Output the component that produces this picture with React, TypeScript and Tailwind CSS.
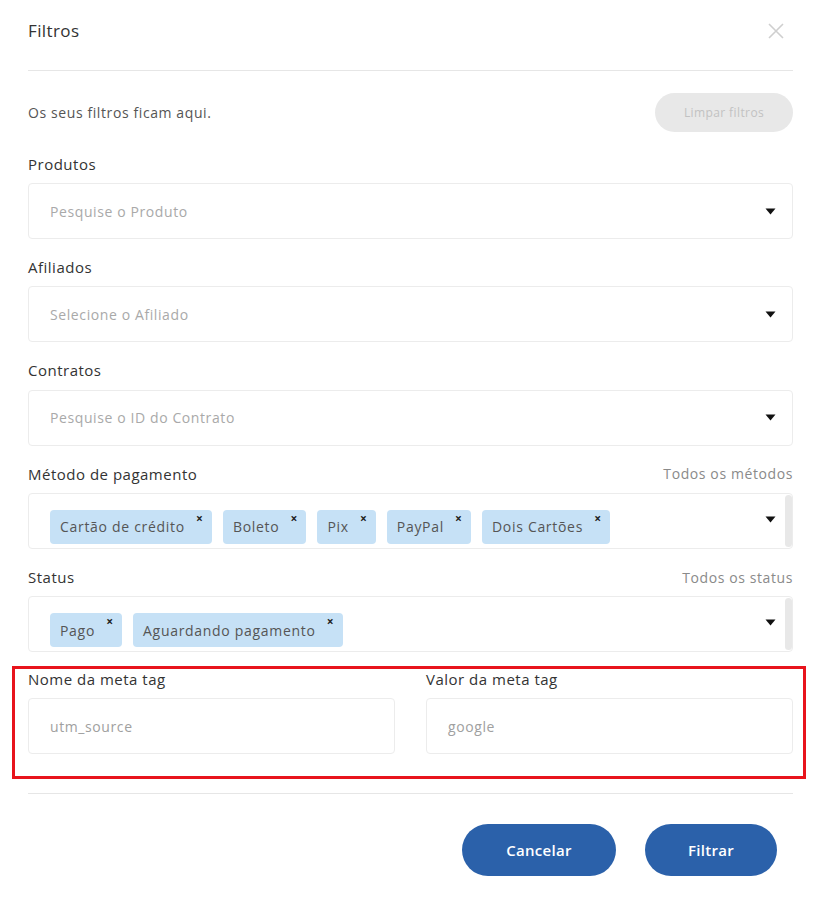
import React from 'react';

const FONT = "font-['Open_Sans',sans-serif]";

const PAYMENT_METHODS = ['Cartão de crédito', 'Boleto', 'Pix', 'PayPal', 'Dois Cartões'];
const STATUSES = ['Pago', 'Aguardando pagamento'];

function Caret() {
  return (
    <svg width="11" height="7" viewBox="0 0 11 7" className="shrink-0">
      <path d="M0.5 0.5 L10.5 0.5 L5.5 6.5 Z" fill="#111" />
    </svg>
  );
}

function Label({ text, hint }: { text: string; hint?: string }) {
  return (
    <div className="mb-[9px] flex h-5 items-center justify-between">
      <span className="text-[15px] font-medium tracking-[0.5px] text-[#333]">{text}</span>
      {hint && <span className="text-[14px] tracking-[0.6px] text-[#8a8a8a]">{hint}</span>}
    </div>
  );
}

function SelectBox({ placeholder }: { placeholder: string }) {
  return (
    <div className="flex h-[56px] items-center justify-between rounded border border-[#ececec] bg-white pl-[21px] pr-[16px]">
      <span className="text-[14px] tracking-[0.6px] text-[#a9a9a9]">{placeholder}</span>
      <Caret />
    </div>
  );
}

function Chip({ text }: { text: string }) {
  return (
    <div className="relative flex h-[34px] items-center rounded bg-[#c6e1f6] pl-[10px] pr-[27px]">
      <span className="text-[14px] tracking-[0.7px] text-[#555]">{text}</span>
      <span className="absolute right-[9px] top-[2px] text-[12px] font-bold leading-[14px] text-[#222]">×</span>
    </div>
  );
}

function ChipBox({ items }: { items: string[] }) {
  return (
    <div className="flex h-[56px] items-stretch rounded border border-[#ececec] bg-white">
      <div className="flex flex-1 items-end gap-[11px] pb-[4px] pl-[21px]">
        {items.map((t) => (
          <Chip key={t} text={t} />
        ))}
      </div>
      <div className="flex items-center pb-[3px] pr-[9px]">
        <Caret />
      </div>
      <div className="my-[1px] w-[7px] rounded bg-[#e8e8e8]" />
    </div>
  );
}

function TextInput({ value }: { value: string }) {
  return (
    <div className="flex h-[56px] items-center rounded border border-[#ececec] bg-white pl-[21px]">
      <span className="text-[14px] tracking-[0.6px] text-[#a0a0a0]">{value}</span>
    </div>
  );
}

export default function App() {
  return (
    <div className={`${FONT} min-h-[901px] w-[825px] bg-white`}>
      <div className="pl-[28px] pr-[32px]">
        {/* Header */}
        <div className="flex items-center justify-between border-b border-[#e6e6e6] pb-[28px] pt-[20px]">
          <h2 className="text-[17px] font-medium leading-[22px] tracking-[0.4px] text-[#333]">Filtros</h2>
          <svg width="18" height="18" viewBox="0 0 18 18" className="mr-[8px]">
            <path d="M2 2 L16 16 M16 2 L2 16" stroke="#cfcfcf" strokeWidth="1.6" />
          </svg>
        </div>

        {/* Subheader */}
        <div className="mt-[22px] flex items-center justify-between">
          <span className="text-[14px] tracking-[0.6px] text-[#555]">Os seus filtros ficam aqui.</span>
          <button className="h-[39px] w-[138px] rounded-full bg-[#e8e8e8] text-[12px] tracking-[0.4px] text-[#c2c2c2]">
            Limpar filtros
          </button>
        </div>

        {/* Fields */}
        <div className="mt-[22px] flex flex-col gap-[18.25px]">
          <div>
            <Label text="Produtos" />
            <SelectBox placeholder="Pesquise o Produto" />
          </div>
          <div>
            <Label text="Afiliados" />
            <SelectBox placeholder="Selecione o Afiliado" />
          </div>
          <div>
            <Label text="Contratos" />
            <SelectBox placeholder="Pesquise o ID do Contrato" />
          </div>
          <div>
            <Label text="Método de pagamento" hint="Todos os métodos" />
            <ChipBox items={PAYMENT_METHODS} />
          </div>
          <div>
            <Label text="Status" hint="Todos os status" />
            <ChipBox items={STATUSES} />
          </div>
        </div>

        {/* Meta tag (highlighted) */}
        <div className="-ml-[16px] -mr-[13px] mt-[14px] border-[3px] border-[#e8141c] pb-[22px] pl-[13px] pr-[10px]">
          <div className="grid grid-cols-2 gap-[31px]">
            <div>
              <Label text="Nome da meta tag" />
              <TextInput value="utm_source" />
            </div>
            <div>
              <Label text="Valor da meta tag" />
              <TextInput value="google" />
            </div>
          </div>
        </div>

        {/* Footer */}
        <div className="mt-[14px] border-t border-[#e6e6e6] pt-[30px]">
          <div className="flex justify-end gap-[29px] pr-[16px]">
            <button className="h-[52px] w-[154px] rounded-full bg-[#2b61aa] text-[15px] font-semibold tracking-[0.3px] text-white">
              Cancelar
            </button>
            <button className="h-[52px] w-[132px] rounded-full bg-[#2b61aa] text-[15px] font-semibold tracking-[0.3px] text-white">
              Filtrar
            </button>
          </div>
        </div>
      </div>
    </div>
  );
}
